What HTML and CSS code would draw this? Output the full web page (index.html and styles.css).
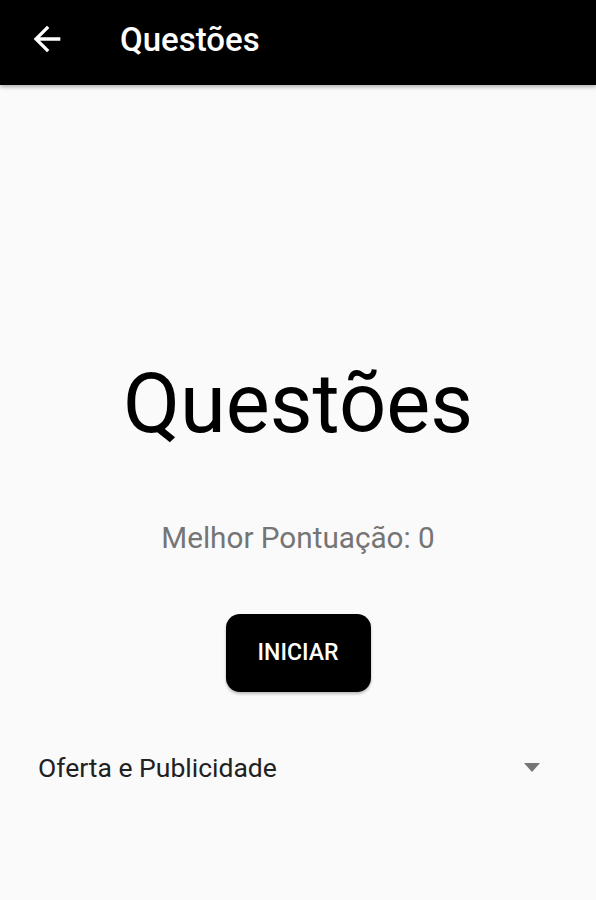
FILE: index.html
```html
<!DOCTYPE html>
<html lang="pt">
<head>
  <meta charset="UTF-8">
  <meta name="viewport" content="width=device-width, initial-scale=1.0">
  <title>Questões</title>
  <link rel="stylesheet" href="styles.css">
</head>
<body>
  <header class="toolbar">
    <button class="back-button" aria-label="Voltar">
      <svg viewBox="0 0 24 24" width="40" height="40">
        <path d="M20 11H7.83l5.59-5.59L12 4l-8 8 8 8 1.41-1.41L7.83 13H20v-2z" fill="#fff"/>
      </svg>
    </button>
    <h1 class="toolbar-title">Questões</h1>
  </header>

  <main class="quiz">
    <h2 class="quiz-title">Questões</h2>
    <p class="best-score">Melhor Pontuação: 0</p>
    <button class="start-button">INICIAR</button>

    <div class="spinner">
      <span class="spinner-text">Oferta e Publicidade</span>
      <svg class="spinner-arrow" viewBox="0 0 16 9" width="16" height="9">
        <path d="M0 0h16L8 9z" fill="#757575"/>
      </svg>
    </div>
  </main>
</body>
</html>
```

FILE: styles.css
```css
:root {
  --bg-color: #fafafa;
  --bar-color: #000;
  --text-color: #000;
  --muted-color: #757575;
}

* {
  margin: 0;
  padding: 0;
  box-sizing: border-box;
}

body {
  font-family: Roboto, "Noto Sans", sans-serif;
  background-color: var(--bg-color);
  color: var(--text-color);
  min-height: 100vh;
}

.toolbar {
  height: 85px;
  background-color: var(--bar-color);
  display: flex;
  align-items: center;
  padding-left: 27px;
  box-shadow: 0 2px 4px rgba(0, 0, 0, 0.3);
  position: relative;
}

.back-button {
  background: none;
  border: none;
  width: 40px;
  height: 40px;
  display: flex;
  margin-top: -7px;
}

.toolbar-title {
  color: #fff;
  font-size: 33px;
  font-weight: 500;
  line-height: 1;
  margin-left: 53px;
  margin-top: -6px;
}

.quiz {
  display: flex;
  flex-direction: column;
  align-items: center;
}

.quiz-title {
  font-size: 83px;
  font-weight: 400;
  line-height: 1;
  margin-top: 277px;
}

.best-score {
  font-size: 29.7px;
  line-height: 1;
  color: var(--muted-color);
  margin-top: 78px;
}

.start-button {
  margin-top: 61px;
  width: 145px;
  height: 78px;
  border: none;
  border-radius: 14px;
  background-color: #000;
  color: #fff;
  font-family: Roboto, "Noto Sans", sans-serif;
  font-size: 23px;
  font-weight: 500;
  box-shadow: 0 2px 3px rgba(0, 0, 0, 0.25);
}

.spinner {
  align-self: stretch;
  display: flex;
  align-items: center;
  justify-content: space-between;
  margin-top: 63px;
  padding: 0 56px 0 38px;
}

.spinner-text {
  font-size: 26.5px;
  line-height: 1;
  color: #212121;
}

.spinner-arrow {
  display: block;
}
```
